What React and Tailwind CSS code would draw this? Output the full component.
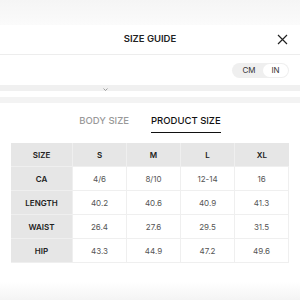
import React from "react";

const cols = ["S", "M", "L", "XL"];
const rows = [
  ["CA", "4/6", "8/10", "12-14", "16"],
  ["LENGTH", "40.2", "40.6", "40.9", "41.3"],
  ["WAIST", "26.4", "27.6", "29.5", "31.5"],
  ["HIP", "43.3", "44.9", "47.2", "49.6"],
];

export default function App() {
  return (
    <div className="w-[300px] h-[300px] bg-white overflow-hidden flex flex-col" style={{ fontFamily: "Inter, 'Open Sans', sans-serif" }}>
      <div className="h-[25px] bg-gradient-to-b from-[#f5f5f5] to-[#fbfbfb] shrink-0" />
      <div className="h-[30px] shrink-0 grid grid-cols-[40px_1fr_40px] items-center border-b border-[#ededed]">
        <div />
        <div className="text-center text-[9.5px] font-semibold text-[#222]">SIZE GUIDE</div>
        <div className="flex justify-end pr-[12px]">
          <svg width="11" height="11" viewBox="0 0 11 11" fill="none" stroke="#222" strokeWidth="1.2">
            <path d="M1 1L10 10M10 1L1 10" />
          </svg>
        </div>
      </div>
      <div className="h-[30px] shrink-0 flex items-center justify-end pr-[11px]">
        <div className="w-[57px] h-[15px] rounded-full bg-[#efefef] flex items-center p-[1px] text-[8px] text-[#333]">
          <div className="flex-1 text-center pl-[2px]">CM</div>
          <div className="w-[25px] h-full rounded-full bg-white flex items-center justify-center">IN</div>
        </div>
      </div>
      <div className="h-[6px] shrink-0 bg-[#f0f0f0] relative">
        <svg className="absolute left-[103px] top-[3px]" width="5" height="3" viewBox="0 0 5 3" fill="none" stroke="#888" strokeWidth="0.8">
          <path d="M0.5 0.5L2.5 2.5L4.5 0.5" />
        </svg>
      </div>
      <div className="h-[6px] shrink-0" />
      <div className="h-[6px] shrink-0 bg-[#f3f3f3]" />
      <div className="flex justify-center gap-[22px] mt-[11px] text-[9.5px] font-medium">
        <div className="text-[#999] pb-[4px] border-b-[1.5px] border-transparent">BODY SIZE</div>
        <div className="text-[#111] pb-[4px] border-b-[1.5px] border-[#111]">PRODUCT SIZE</div>
      </div>
      <div className="mx-[11px] mt-[10px] grid grid-cols-[62px_repeat(4,1fr)] text-[8px]">
        <div className="h-[24px] bg-[#e6e6e6] border-r border-b border-[#efefef] flex items-center justify-center font-semibold text-[#222]">SIZE</div>
        {cols.map((c, i) => (
          <div key={c} className={`h-[24px] bg-[#e6e6e6] border-b border-[#efefef] flex items-center justify-center font-semibold text-[#222] ${i < 3 ? "border-r" : ""}`}>{c}</div>
        ))}
        {rows.map((r, ri) =>
          r.map((v, ci) =>
            ci === 0 ? (
              <div key={ri + "-" + ci} className="h-[24px] bg-[#e6e6e6] border-r border-b border-[#efefef] flex items-center justify-center font-semibold text-[#222]">{v}</div>
            ) : (
              <div key={ri + "-" + ci} className="h-[24px] bg-white border-b border-r border-[#efefef] flex items-center justify-center text-[#555]">{v}</div>
            )
          )
        )}
      </div>
      <div className="flex-1 bg-gradient-to-b from-white via-white to-[#f4f4f4]" />
    </div>
  );
}
